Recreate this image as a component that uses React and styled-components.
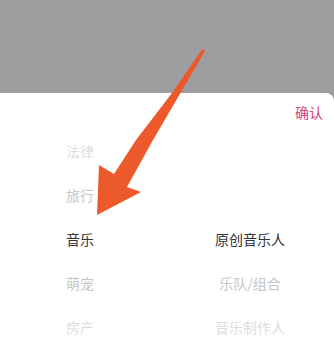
import React from "react";
import styled, { createGlobalStyle } from "styled-components";

const Global = createGlobalStyle`
  html, body { margin: 0; padding: 0; background: #9e9d9f; }
  body { font-family: "Noto Sans CJK SC", "Noto Sans", sans-serif; }
`;

const Screen = styled.div`
  position: relative;
  width: 334px;
  height: 341px;
  overflow: hidden;
  display: flex;
  flex-direction: column;
  background: #9e9d9f;
`;

const Mask = styled.div`
  height: 93px;
  flex: none;
`;

const Sheet = styled.div`
  flex: 1;
  background: #ffffff;
  border-top-right-radius: 8px;
  display: flex;
  flex-direction: column;
`;

const Header = styled.div`
  height: 36px;
  display: flex;
  align-items: center;
  justify-content: flex-end;
  padding-right: 11px;
`;

const Confirm = styled.span`
  font-size: 14px;
  color: #d9437d;
  line-height: 1;
  margin-top: 2px;
`;

const Picker = styled.div`
  display: grid;
  grid-template-columns: 160px 180px;
`;

const Column = styled.div`
  display: flex;
  flex-direction: column;
`;

const Item = styled.div`
  height: 44px;
  display: flex;
  align-items: center;
  justify-content: center;
  font-size: 14px;
  line-height: 1;
  color: ${(p) => p.$color};
`;

const Overlay = styled.svg`
  position: absolute;
  left: 0;
  top: 0;
  pointer-events: none;
`;

const tone = ["#dedede", "#c6c6c6", "#333333", "#c6c6c6", "#dedede"];

const left = ["法律", "旅行", "音乐", "萌宠", "房产"];
const right = ["", "", "原创音乐人", "乐队/组合", "音乐制作人"];

export default function App() {
  return (
    <>
      <Global />
      <Screen>
        <Mask />
        <Sheet>
          <Header>
            <Confirm>确认</Confirm>
          </Header>
          <Picker>
            <Column>
              {left.map((t, i) => (
                <Item key={i} $color={tone[i]}>{t}</Item>
              ))}
            </Column>
            <Column>
              {right.map((t, i) => (
                <Item key={i} $color={tone[i]}>{t}</Item>
              ))}
            </Column>
          </Picker>
        </Sheet>
        <Overlay width="334" height="341" viewBox="0 0 334 341">
          <polygon
            points="203,49 205,51 153,140 127,187 141,192 97,215 99,165 114,174 136,140 172,93 201,51"
            fill="#ec5a2b"
          />
        </Overlay>
      </Screen>
    </>
  );
}
